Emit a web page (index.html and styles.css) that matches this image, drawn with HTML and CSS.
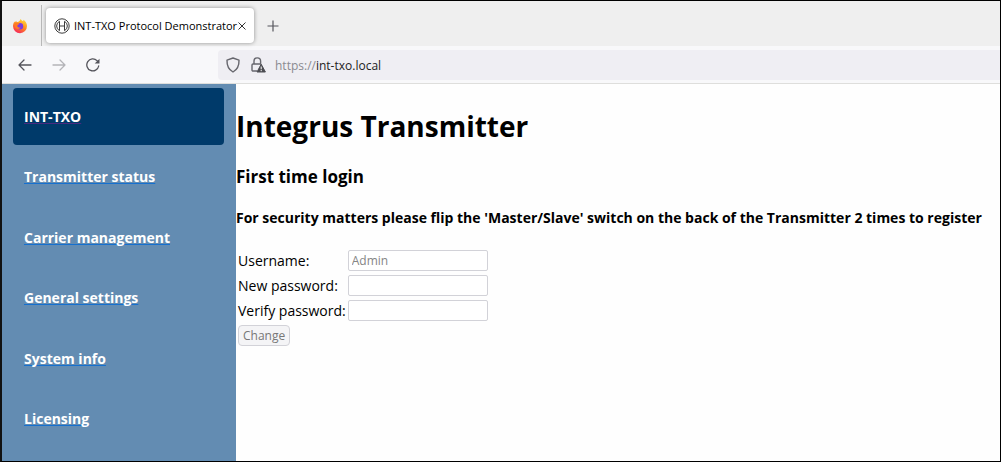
FILE: index.html
```html
<!DOCTYPE html>
<html lang="en">
<head>
    <meta charset="UTF-8">
    <meta name="viewport" content="width=device-width, initial-scale=1.0">
    <title>INT-TXO Protocol Demonstrator</title>
    <link rel="stylesheet" href="styles.css">
</head>
<body>

    <header class="browser">
        <div class="tab-strip">
            <div class="pinned">
                <svg width="16" height="16" viewBox="0 0 16 16" aria-hidden="true">
                    <defs>
                        <linearGradient id="flame" x1="0.8" y1="0" x2="0.3" y2="1">
                            <stop offset="0" stop-color="#ffe03c"/>
                            <stop offset="0.5" stop-color="#ff8a1e"/>
                            <stop offset="1" stop-color="#f5245c"/>
                        </linearGradient>
                    </defs>
                    <path d="M8.5 1c.6 1 1.500 1.700 2.600 2.200.3-.5.3-1 .2-1.500 2 1 3.700 3.600 3.700 6.400A7 7 0 0 1 1 8.300c0-2 .6-3.600 1.500-4.900l.3 1.100 1.400-1.800.5 1.500C6 4.200 7.900 3.500 8.500 1z" fill="url(#flame)"/>
                    <circle cx="8" cy="8.200" r="3.200" fill="#7a3be0"/>
                    <path d="M3.200 5.200c1.800-.8 3.400-.3 4.600.7-1.600.2-1.600 1.200-2.600 1.500.2 1.600 1.600 2.600 3.400 2 -1.500 2.500-5.600 1.700-5.900-1.400z" fill="#ff7a22"/>
                </svg>
            </div>
            <div class="tab">
                <svg width="16" height="16" viewBox="0 0 16 16" fill="none" stroke="#3c3c3c" aria-hidden="true">
                    <circle cx="8" cy="8" r="7.200"/>
                    <path d="M5.500 3.300v9.400M10.500 3.300v9.400M5.500 8h5"/>
                    <path d="M5.500 3.300a5.300 5.300 0 0 0 0 9.400M10.500 3.300a5.300 5.300 0 0 1 0 9.400"/>
                </svg>
                <span class="tab-title">INT-TXO Protocol Demonstrator</span>
                <button class="icon-button" aria-label="Close tab">
                    <svg width="8" height="8" viewBox="0 0 8 8" fill="none" stroke="#333"><path d="M.5.5l7 7M7.500.5l-7 7"/></svg>
                </button>
            </div>
            <button class="icon-button new-tab" aria-label="New tab">
                <svg width="12" height="12" viewBox="0 0 12 12" fill="none" stroke="#55555c" stroke-width="1.200"><path d="M6 .5v11M.5 6h11"/></svg>
            </button>
        </div>
        <div class="toolbar">
            <div class="nav-buttons">
                <button class="icon-button" aria-label="Back">
                    <svg width="14" height="12" viewBox="0 0 14 12" fill="none" stroke="#55555c" stroke-width="1.300" stroke-linecap="round" stroke-linejoin="round"><path d="M13 6H1M6 1L1 6l5 5"/></svg>
                </button>
                <button class="icon-button" aria-label="Forward" disabled>
                    <svg width="14" height="12" viewBox="0 0 14 12" fill="none" stroke="#b4b4b8" stroke-width="1.300" stroke-linecap="round" stroke-linejoin="round"><path d="M1 6h12M8 1l5 5-5 5"/></svg>
                </button>
                <button class="icon-button" aria-label="Reload">
                    <svg width="14" height="14" viewBox="0 0 14 14" fill="none" stroke="#55555c" stroke-width="1.300" stroke-linecap="round"><path d="M12.700 8A6 6 0 1 1 11 2.600L12 3.600"/><path d="M13.500.7v4.800H8.700z" fill="#55555c" stroke="none"/></svg>
                </button>
            </div>
            <div class="address-bar">
                <svg width="16" height="16" viewBox="0 0 16 16" fill="none" stroke="#66666d" stroke-width="1.400" stroke-linejoin="round" aria-hidden="true"><path d="M8 1l6 2.200c.2 5.400-1.400 9.200-6 11.800C3.400 12.400 1.800 8.600 2 3.200z"/></svg>
                <svg width="16" height="16" viewBox="0 0 16 16" fill="none" stroke="#66666d" stroke-width="1.400" aria-hidden="true">
                    <path d="M4 7V4.200a3.300 3.300 0 0 1 6.600 0V7M7 14H3a1 1 0 0 1-1-1V8a1 1 0 0 1 1-1h8"/>
                    <path d="M11.200 7.200L15.400 15H7z" fill="#4c4c52" stroke="#4c4c52" stroke-width="1" stroke-linejoin="round"/>
                    <path d="M11.200 9.500v2.800M11.200 13v1.200" stroke="#fff" stroke-width="1"/>
                </svg>
                <span class="url"><span class="scheme">https://</span>int-txo.local</span>
            </div>
        </div>
    </header>

    <div class="page">
        <nav class="sidebar">
            <a class="brand" href="#">INT-TXO</a>
            <a href="#">Transmitter status</a>
            <a href="#">Carrier management</a>
            <a href="#">General settings</a>
            <a href="#">System info</a>
            <a href="#">Licensing</a>
        </nav>

        <main class="content">
            <h1>Integrus Transmitter</h1>
            <h2>First time login</h2>
            <h3>For security matters please flip the 'Master/Slave' switch on the back of the Transmitter 2 times to register</h3>

            <form class="login-form">
                <label for="username">Username:</label>
                <input type="text" id="username" placeholder="Admin">
                <label for="newPassword">New password:</label>
                <input type="password" id="newPassword">
                <label for="verifyPassword">Verify password:</label>
                <input type="password" id="verifyPassword">
                <button type="submit" disabled>Change</button>
            </form>
        </main>
    </div>

</body>
</html>
```

FILE: styles.css
```css
* {
    box-sizing: border-box;
}

body {
    display: flex;
    flex-direction: column;
    min-height: 100vh;
    margin: 0;
    border: 1px solid #000;
    border-left: 2px solid #111;
    background-color: #fefefe;
    color: #000;
    font-family: "Open Sans", "Noto Sans", sans-serif;
    font-size: 14px;
}

/* Browser tabs and toolbar */
.browser {
    border-bottom: 1px solid #dededc;
    font-size: 12px;
}

.tab-strip {
    display: flex;
    align-items: center;
    height: 45px;
    background-color: #efefef;
}

.pinned {
    display: flex;
    align-items: center;
    align-self: flex-end;
    width: 40px;
    height: 41px;
    padding-left: 10px;
    border-right: 1px solid #b8b8b8;
}

.tab {
    display: flex;
    align-items: center;
    width: 208px;
    height: 35px;
    margin: 4px 0 0 4px;
    padding: 0 8px;
    border-radius: 4px;
    background-color: #fff;
    box-shadow: 0 0 4px rgba(0, 0, 0, 0.4);
}

.tab svg {
    flex-shrink: 0;
}

.tab-title {
    flex: 1;
    margin-left: 4px;
    font-size: 11px;
    white-space: nowrap;
}

.icon-button {
    display: flex;
    padding: 0;
    border: none;
    background: none;
}

.new-tab {
    margin: 4px 0 0 13px;
}

.toolbar {
    display: flex;
    align-items: center;
    height: 37px;
    padding-top: 1px;
    background-color: #f8f8fa;
}

.nav-buttons {
    display: flex;
    align-items: center;
    gap: 20px;
    width: 216px;
    padding-left: 16px;
}

.address-bar {
    display: flex;
    align-items: center;
    flex: 1;
    gap: 9px;
    height: 30px;
    padding-left: 7px;
    border-radius: 4px 0 0 4px;
    background-color: #efeef3;
}

.url {
    color: #222;
}

.scheme {
    color: #8a8a90;
}

/* Page layout */
.page {
    display: flex;
    flex: 1;
}

.sidebar {
    display: flex;
    flex-direction: column;
    flex-shrink: 0;
    gap: 3px;
    width: 234px;
    padding: 4px 12px 10px 11px;
    background-color: #638cb2;
}

.sidebar a {
    padding: 18px 11px 17px;
    border-radius: 4px;
    color: #fff;
    font-weight: 700;
    line-height: 1.6;
    text-decoration: underline;
    text-decoration-color: #1570d0;
    text-decoration-skip-ink: none;
    text-underline-offset: 1px;
}

.sidebar .brand {
    background-color: #003a6a;
    text-decoration-color: #4a2a80;
}

.content {
    flex: 1;
}

.content h1 {
    margin: 22px 0 20px;
    font-size: 28px;
    line-height: 40px;
}

.content h2 {
    margin: 0 0 20px;
    font-size: 17px;
    line-height: 22px;
}

.content h3 {
    margin: 0 0 22px;
    font-size: 14px;
    line-height: 20px;
    white-space: nowrap;
}

/* Login form */
.login-form {
    display: grid;
    grid-template-columns: max-content 140px;
    align-items: center;
    gap: 4px 2px;
    padding-left: 2px;
}

.login-form label {
    line-height: 21px;
}

.login-form input,
.login-form button {
    height: 21px;
    border: 1px solid #d2d2d8;
    border-radius: 2px;
    font-family: inherit;
    font-size: 12px;
}

.login-form input {
    width: 100%;
    padding: 0 3px;
    background-color: #fff;
}

.login-form input::placeholder {
    color: #858585;
}

.login-form button {
    justify-self: start;
    padding: 0 4px;
    border-radius: 4px;
    background-color: #f4f4f6;
    color: #777;
}
```
